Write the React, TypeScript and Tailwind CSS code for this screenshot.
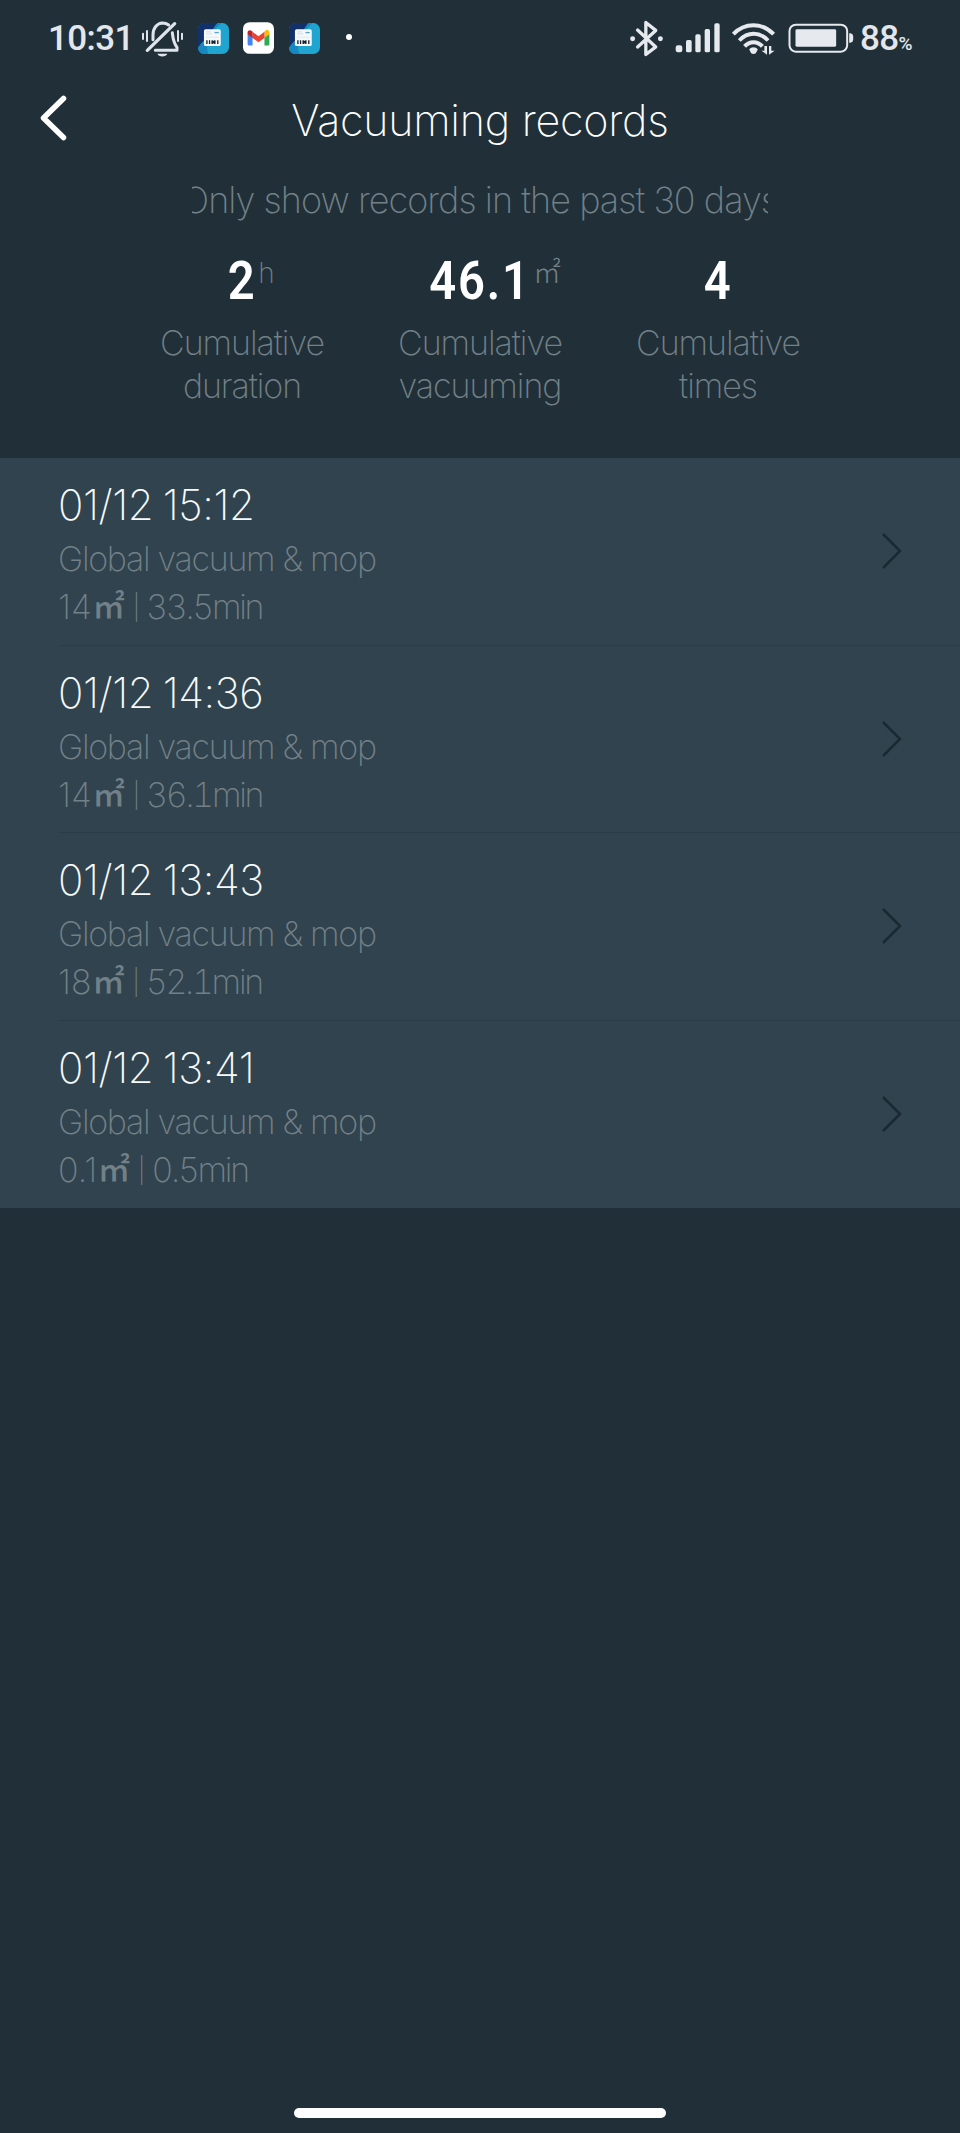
type IconProps = { className?: string };

const stats = [
  { value: "2", unit: "h", unitClass: "ml-0", label: ["Cumulative", "duration"] },
  { value: "46.1", unit: "㎡", unitClass: "-ml-1", label: ["Cumulative", "vacuuming"] },
  { value: "4", unit: "", unitClass: "ml-0", label: ["Cumulative", "times"] },
];

const records = [
  { date: "01/12 15:12", mode: "Global vacuum & mop", area: "14", time: "33.5min" },
  { date: "01/12 14:36", mode: "Global vacuum & mop", area: "14", time: "36.1min" },
  { date: "01/12 13:43", mode: "Global vacuum & mop", area: "18", time: "52.1min" },
  { date: "01/12 13:41", mode: "Global vacuum & mop", area: "0.1", time: "0.5min" },
];

function BellOffIcon({ className }: IconProps) {
  return (
    <svg viewBox="330 55 135 120" width="45" height="40" className={className} fill="none" stroke="#dfe3ea" strokeWidth="9" strokeLinecap="round" strokeLinejoin="round">
      <path d="M434 69 352 149" strokeWidth="10" />
      <path d="M369 117V103C369 82 381 68 397 67c8 0 14 2 19 6" />
      <path d="M427 96c2 16 2 28 14 44v9H376" />
      <path d="M382 159h30c-4 11-26 11-30 0z" fill="#dfe3ea" stroke="none" />
      <path d="M339 99v16M351 91v30M444 91v30M456 99v16" strokeWidth="6" />
    </svg>
  );
}

function CardAppIcon({ className }: IconProps) {
  return (
    <svg viewBox="0 0 94 94" width="31" height="31" className={className}>
      <rect width="94" height="94" rx="20" fill="#1fa5cf" />
      <path d="M20 0H60C46 14 42 30 30 44 18 54 8 62 0 76V20C0 8 8 0 20 0z" fill="#12306a" />
      <path d="M60 0C46 14 42 30 30 44 18 54 8 62 0 76c1 10 8 18 18 18h14c-14-30 10-70 40-94z" fill="#1688bf" />
      <rect x="18" y="19" width="51" height="51" rx="5" fill="#f5f9fc" />
      <path d="M25 27h14M25 33h18" stroke="#c3d0da" strokeWidth="2" />
      <path d="M50 29h13" stroke="#4da5d8" strokeWidth="4" />
      <path d="M25 43h38" stroke="#d5dfe6" strokeWidth="2" />
      <path d="M27 52v12M35 52v12M43 52v12M51 52v12M60 52v12" stroke="#18232d" strokeWidth="4" />
      <path d="M42 58h10" stroke="#18232d" strokeWidth="8" />
    </svg>
  );
}

function MailAppIcon({ className }: IconProps) {
  return (
    <svg viewBox="0 0 94 96" width="31" height="32" className={className}>
      <rect width="94" height="96" rx="20" fill="#fff" />
      <path d="M14 34v32c0 3 2 5 5 5h10V42z" fill="#4285f4" />
      <path d="M80 34v32c0 3-2 5-5 5H65V42z" fill="#34a853" />
      <path d="M65 29v19l15-11v-6c0-8-8-10-12-6z" fill="#fbbc04" />
      <path d="M29 29v19l18 13 18-13V29L47 43z" fill="#ea4335" />
      <path d="M14 31v6l15 11V29l-3-3c-5-4-12-1-12 5z" fill="#c5221f" />
    </svg>
  );
}

function BluetoothIcon({ className }: IconProps) {
  return (
    <svg viewBox="55 55 106 114" width="35" height="38" className={className} fill="none" stroke="#e6eaee" strokeWidth="10" strokeLinecap="round" strokeLinejoin="round">
      <path d="M81 88 136 139 106 162V65L136 89 81 139" />
      <circle cx="66" cy="114" r="7.500" fill="#e6eaee" stroke="none" />
      <circle cx="150" cy="114" r="7.500" fill="#e6eaee" stroke="none" />
    </svg>
  );
}

function SignalIcon({ className }: IconProps) {
  return (
    <svg viewBox="194 70 135 90" width="45" height="30" className={className} fill="#e6eaee">
      <rect x="196" y="137" width="20" height="21" rx="7" />
      <rect x="227" y="121" width="17" height="37" rx="5" />
      <rect x="255" y="104" width="16" height="54" rx="5" />
      <rect x="283" y="88" width="16" height="70" rx="5" />
      <rect x="312" y="71" width="16" height="87" rx="5" />
    </svg>
  );
}

function WifiIcon({ className }: IconProps) {
  return (
    <svg viewBox="362 64 134 100" width="45" height="33" className={className} fill="none" stroke="#e6eaee" strokeWidth="12">
      <path d="M368 101C402 65 456 65 490 101" />
      <path d="M386 120c25-27 62-27 87 0" />
      <path d="M402 138c15-17 39-17 54 0" />
      <path d="M416 147c6-9 20-9 26 0l-6 12c-4 3-10 3-14 0z" fill="#e6eaee" stroke="none" />
      <path d="M470 137v26l-17-12h9v-14zM476 163v-26h7v14h10z" fill="#e6eaee" stroke="none" />
    </svg>
  );
}

function BatteryIcon({ className }: IconProps) {
  return (
    <svg viewBox="534 68 197 90" width="66" height="30" className={className}>
      <rect x="538" y="73" width="173" height="81" rx="19" fill="none" stroke="#e6eaee" strokeWidth="6" />
      <rect x="556" y="87" width="122" height="52" rx="4" fill="#e6eaee" />
      <path d="M717 99h4q8 2 8 9v10q0 7-8 9h-4z" fill="#e6eaee" />
    </svg>
  );
}

function StatusBar() {
  return (
    <div className="flex h-[76px] items-center pl-12 font-[Roboto,sans-serif] font-medium text-[#e3e7ec]">
      <span className="w-[92px] text-[35px] leading-none tracking-[-0.6px]">10:31</span>
      <BellOffIcon className="mt-px shrink-0" />
      <CardAppIcon className="ml-[13px] shrink-0" />
      <MailAppIcon className="ml-[14px] shrink-0" />
      <CardAppIcon className="ml-[15px] shrink-0" />
      <span className="-mt-0.5 ml-[26px] size-1.5 rounded-full bg-white" />
      <BluetoothIcon className="ml-auto shrink-0" />
      <SignalIcon className="ml-[11px] shrink-0" />
      <WifiIcon className="ml-[11px] shrink-0" />
      <BatteryIcon className="ml-[12px] shrink-0" />
      <span className="ml-[6px] w-[100px] text-[35px] leading-none tracking-[-0.7px]">
        88<span className="text-[19px]">%</span>
      </span>
    </div>
  );
}

export default function App() {
  return (
    <div className="flex h-[2133px] w-[960px] flex-col overflow-hidden bg-[#213038] font-[Inter,'Noto_Sans_CJK_SC',sans-serif] font-[250] text-[#728087]">
      <StatusBar />

      <header className="grid h-[88px] grid-cols-[100px_1fr_100px] items-center text-white">
        <svg viewBox="0 0 28 46" width="28" height="46" className="ml-[39px] -mt-1" fill="none" stroke="#fff" strokeWidth="5.500" strokeLinecap="round" strokeLinejoin="round">
          <path d="M24.500 3.500 4.500 23 24.500 42.500" />
        </svg>
        <h1 className="text-center text-[43px] leading-none tracking-[-0.25px]">Vacuuming records</h1>
      </header>

      {/* the hint is wider than its 60% box and gets clipped on both sides */}
      <div className="mx-auto flex h-[72px] w-[576px] items-center justify-center overflow-hidden text-[36px] tracking-[-0.95px] whitespace-nowrap">
        <span className="shrink-0">Only show records in the past 30 days</span>
      </div>

      <section className="grid h-[222px] grid-cols-[238px_238px_238px] justify-center pt-[17px] text-center">
        {stats.map((s) => (
          <div key={s.label[1]}>
            <div className="grid h-[56px] grid-cols-[1fr_auto_1fr] items-center">
              <span className="col-start-2 scale-x-[0.89] font-[Roboto,sans-serif] text-[53px] leading-none font-semibold tracking-[2px] text-white">{s.value}</span>
              <span className={`mb-4 text-left text-[28px] leading-none ${s.unitClass}`}>{s.unit}</span>
            </div>
            <p className="mt-[13px] text-[34px] leading-[42.500px] tracking-[-1.05px]">
              {s.label[0]}
              <br />
              {s.label[1]}
            </p>
          </div>
        ))}
      </section>

      <ul className="bg-[#31434e]">
        {records.map((r, i) => (
          <li key={r.date} className="flex h-[187.500px] items-center pl-[58px]">
            <div className={i < records.length - 1 ? "flex h-full flex-1 items-center border-b border-[#2c3d47]" : "flex h-full flex-1 items-center"}>
              <div className="h-full flex-1 pt-[21px]">
                <p className="text-[42px] leading-[52px] tracking-[-0.4px] text-[#f6fafb] [word-spacing:-2px]">{r.date}</p>
                <p className="mt-px text-[34px] leading-[54px] tracking-[-1.3px]">{r.mode}</p>
                <p className="flex items-center text-[34px] leading-[42px]">
                  {r.area}
                  <span className="ml-px text-[32px] font-medium">㎡</span>
                  <span className="ml-[8px] text-[25px]">|</span>
                  <span className="ml-[6px] tracking-[-2.3px] tabular-nums">{r.time}</span>
                </p>
              </div>
              <svg viewBox="0 0 22 38" width="22" height="38" className="mr-[57px]" fill="none" stroke="#1b2a32" strokeWidth="2.500">
                <path d="M2 2 19 19 2 36" />
              </svg>
            </div>
          </li>
        ))}
      </ul>

      <div className="mx-auto mt-auto mb-[15px] h-[10px] w-[372px] rounded-full bg-white" />
    </div>
  );
}
